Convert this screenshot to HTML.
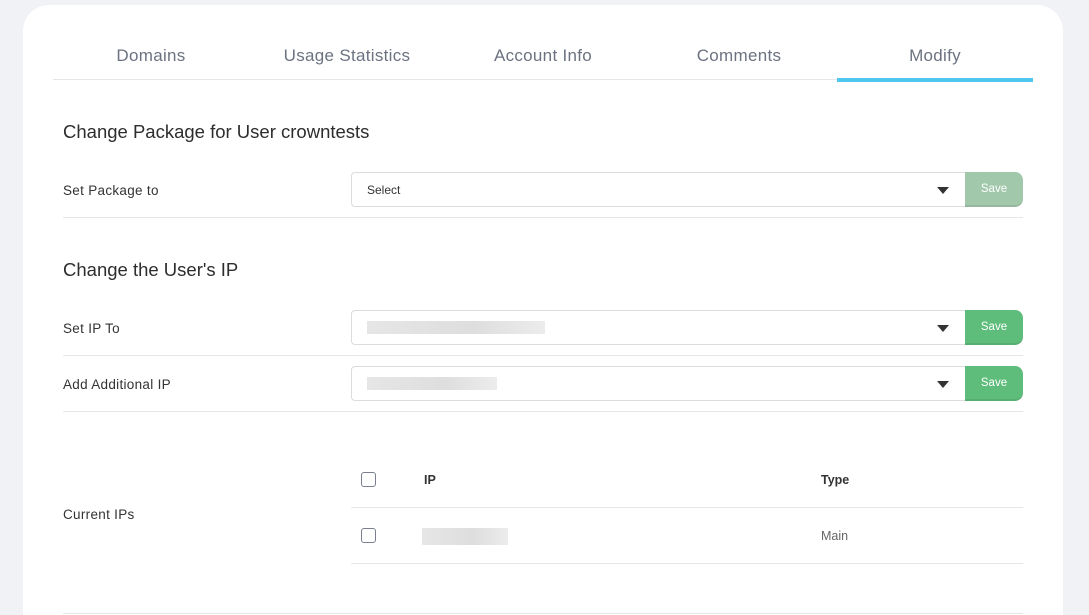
<!DOCTYPE html>
<html><head><meta charset="utf-8"><style>
*{box-sizing:border-box;margin:0;padding:0}
html{width:1089px;height:615px;overflow:hidden}
body{width:1089px;height:615px;background:#f1f2f6;font-family:"Liberation Sans",sans-serif;position:relative;overflow:hidden;color:#333}
.card{position:absolute;left:23px;top:5px;width:1040px;height:610px;background:#fff;border-radius:26px 26px 0 0}
.abs{position:absolute}
.tab{position:absolute;top:46px;font-size:17px;color:#6b7280;text-align:center;width:196px;letter-spacing:.3px}
.line{position:absolute;height:1px;background:#e6e6e6}
.h{position:absolute;left:63px;font-size:18.5px;color:#2d2d2d}
.lbl{position:absolute;left:63px;font-size:13.5px;color:#333;letter-spacing:.3px}
.sel{position:absolute;left:351px;width:614px;height:35px;border:1px solid #dcdcdc;border-right:none;border-radius:4px 0 0 4px;background:#fff}
.sel .car{position:absolute;right:16px;top:14px;width:0;height:0;border-left:6px solid transparent;border-right:6px solid transparent;border-top:7px solid #333}
.btn{position:absolute;left:965px;width:58px;height:35px;border-radius:0 8px 8px 0;color:#fff;font-size:11.5px;text-align:center;line-height:35px;border-bottom:2px solid rgba(0,0,0,.08)}
.blur{position:absolute;height:13px;background:linear-gradient(90deg,#e6e6e6,#dedede 60%,#ececec)}
.cb{position:absolute;left:361px;width:15px;height:15px;border:1.5px solid #7a7f8f;border-radius:3px}
</style></head><body>
<div class="card"></div>
<div class="tab" style="left:53px">Domains</div>
<div class="tab" style="left:249px">Usage Statistics</div>
<div class="tab" style="left:445px">Account Info</div>
<div class="tab" style="left:641px">Comments</div>
<div class="tab" style="left:837px">Modify</div>
<div class="line" style="left:53px;top:79px;width:980px"></div>
<div class="abs" style="left:837px;top:78px;width:196px;height:4px;background:#4fc8f0"></div>

<div class="h" style="top:121px">Change Package for User crowntests</div>
<div class="lbl" style="top:183px">Set Package to</div>
<div class="sel" style="top:172px"><span class="abs" style="left:15px;top:10px;font-size:12px;color:#333">Select</span><div class="car"></div></div>
<div class="btn" style="top:172px;background:#a2c8ab">Save</div>
<div class="line" style="left:63px;top:217px;width:960px"></div>

<div class="h" style="top:259px">Change the User's IP</div>
<div class="lbl" style="top:321px">Set IP To</div>
<div class="sel" style="top:310px"><div class="blur" style="left:15px;top:10px;width:178px"></div><div class="car"></div></div>
<div class="btn" style="top:310px;background:#5fbd7c">Save</div>
<div class="line" style="left:63px;top:355px;width:960px"></div>
<div class="lbl" style="top:377px">Add Additional IP</div>
<div class="sel" style="top:366px"><div class="blur" style="left:15px;top:10px;width:130px"></div><div class="car"></div></div>
<div class="btn" style="top:366px;background:#5fbd7c">Save</div>
<div class="line" style="left:63px;top:411px;width:960px"></div>

<div class="lbl" style="top:507px">Current IPs</div>
<div class="cb" style="top:472px"></div>
<div class="abs" style="left:424px;top:473px;font-size:12.5px;font-weight:bold">IP</div>
<div class="abs" style="left:821px;top:473px;font-size:12.5px;font-weight:bold">Type</div>
<div class="line" style="left:351px;top:507px;width:672px"></div>
<div class="cb" style="top:528px"></div>
<div class="blur" style="left:422px;top:528px;width:86px;height:17px"></div>
<div class="abs" style="left:821px;top:529px;font-size:12.5px;color:#666">Main</div>
<div class="line" style="left:351px;top:563px;width:672px"></div>
<div class="line" style="left:63px;top:613px;width:960px"></div>
</body></html>
